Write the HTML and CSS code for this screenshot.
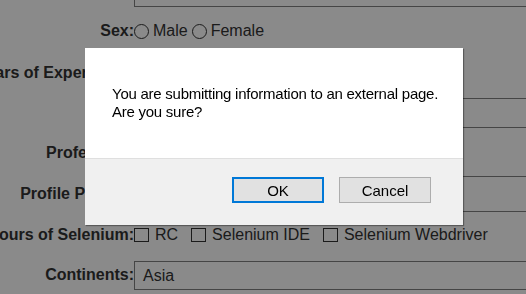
FILE: index.html
```html
<!DOCTYPE html>
<html lang="en">
<head>
    <meta charset="UTF-8">
    <meta name="viewport" content="width=device-width, initial-scale=1.0">
    <title>Practice Form</title>
    <link rel="stylesheet" href="styles.css">
</head>
<body>
    <form class="form">
        <label class="lbl">Last name:</label>
        <div class="field"><input class="text" type="text"></div>

        <label class="lbl">Sex:</label>
        <div class="field">
            <input class="radio" type="radio" name="sex"> <span class="opt">Male</span>
            <input class="radio" type="radio" name="sex"> <span class="opt">Female</span>
        </div>

        <label class="lbl">Years of Experience:</label>
        <div class="field">
            <input class="radio" type="radio" name="exp"> <span class="opt">1</span>
            <input class="radio" type="radio" name="exp"> <span class="opt">2</span>
            <input class="radio" type="radio" name="exp"> <span class="opt">3</span>
        </div>

        <label class="lbl">Date:</label>
        <div class="field"><input class="text" type="text"></div>

        <label class="lbl">Profession:</label>
        <div class="field">
            <input class="check" type="checkbox"> <span class="opt">Manual Tester</span>
            <input class="check" type="checkbox"> <span class="opt">Automation Tester</span>
        </div>

        <label class="lbl">Profile Picture:</label>
        <div class="field"><div class="file"></div></div>

        <label class="lbl">Flavours of Selenium:</label>
        <div class="field">
            <input class="check" type="checkbox"> <span class="opt">RC</span>
            <input class="check" type="checkbox"> <span class="opt">Selenium IDE</span>
            <input class="check" type="checkbox"> <span class="opt">Selenium Webdriver</span>
        </div>

        <label class="lbl">Continents:</label>
        <div class="field"><div class="select">Asia</div></div>
    </form>

    <div class="overlay">
        <div class="dialog">
            <div class="dialog-body">
                You are submitting information to an external page.<br>
                Are you sure?
            </div>
            <div class="dialog-foot">
                <button class="btn btn-default" type="button">OK</button>
                <button class="btn" type="button">Cancel</button>
            </div>
        </div>
    </div>
</body>
</html>
```

FILE: styles.css
```css
body {
    margin: 0;
    background: #fff;
    font-family: "Liberation Sans", Arial, sans-serif;
    color: #333;
    overflow: hidden;
}

.form {
    display: grid;
    grid-template-columns: 234px 1fr;
    grid-template-rows: 36px 42px 41px 39px 41px 41px 41px 40px;
    margin: -26px 0 0 -100px;
}

.lbl {
    font-size: 16px;
    font-weight: bold;
    text-align: right;
    white-space: nowrap;
    align-self: center;
}

.field {
    display: flex;
    align-items: center;
    font-size: 16px;
    white-space: nowrap;
}

    .field .opt {
        margin: 0 4px 0 4px;
    }

.text {
    box-sizing: border-box;
    width: 420px;
    height: 30px;
    border: 1px solid #808080;
    margin: 0;
}

.file {
    box-sizing: border-box;
    width: 420px;
    height: 36px;
    border: 1px solid #808080;
}

.select {
    box-sizing: border-box;
    width: 420px;
    height: 29px;
    border: 1px solid #808080;
    padding: 5px 8px 0;
    color: #333;
}

.radio {
    appearance: none;
    width: 15px;
    height: 15px;
    border: 1px solid #333;
    border-radius: 50%;
    margin: 0;
    box-sizing: border-box;
}

.check {
    appearance: none;
    width: 15px;
    height: 14px;
    border: 1px solid #333;
    margin: 0 2px 0 0;
    box-sizing: border-box;
}

    .opt + .check {
        margin-left: 9px;
    }

.overlay {
    position: fixed;
    inset: 0;
    background: rgba(0, 0, 0, 0.46);
    padding: 48px 0 0 85px;
}

.dialog {
    width: 378px;
    height: 177px;
    background: #fff;
    box-shadow: 1px 1px 1px rgba(0, 0, 0, 0.35);
    display: flex;
    flex-direction: column;
    color: #000;
}

.dialog-body {
    height: 110px;
    box-sizing: border-box;
    padding: 37px 0 0 27px;
    font-size: 15px;
    line-height: 18px;
    letter-spacing: -0.25px;
    white-space: nowrap;
}

.dialog-foot {
    flex: 1;
    background: #f0f0f0;
    border-top: 1px solid #dfdfdf;
    display: flex;
    justify-content: flex-end;
    gap: 15px;
    padding: 18px 32px 0 0;
    align-items: flex-start;
}

.btn {
    width: 92px;
    height: 26px;
    box-sizing: border-box;
    background: #e1e1e1;
    border: 1px solid #adadad;
    font-family: "Liberation Sans", Arial, sans-serif;
    font-size: 15px;
    color: #000;
    padding: 0;
}

    .btn.btn-default {
        border: 2px solid #0078d7;
    }
```
